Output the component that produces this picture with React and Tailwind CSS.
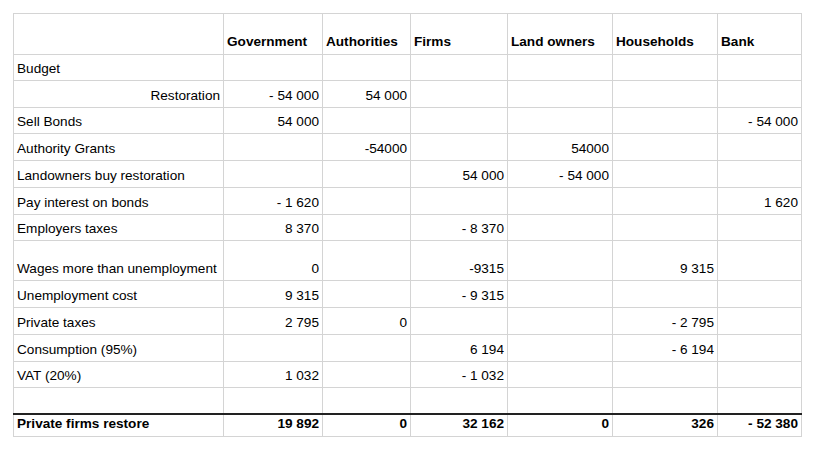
const columns = ["", "Government", "Authorities", "Firms", "Land owners", "Households", "Bank"];

const widths = ["w-[210px]", "w-[99px]", "w-[88px]", "w-[97px]", "w-[105px]", "w-[105px]", "w-[84px]"];

// [label, values..., row height]
const rows = [
  { label: "Budget", values: ["", "", "", "", "", ""], h: "h-[26px]" },
  { label: "Restoration", right: true, values: ["- 54 000", "54 000", "", "", "", ""], h: "h-[27px]" },
  { label: "Sell Bonds", values: ["54 000", "", "", "", "", "- 54 000"], h: "h-[26px]" },
  { label: "Authority Grants", values: ["", "-54000", "", "54000", "", ""], h: "h-[27px]" },
  { label: "Landowners buy restoration", values: ["", "", "54 000", "- 54 000", "", ""], h: "h-[27px]" },
  { label: "Pay interest on bonds", values: ["- 1 620", "", "", "", "", "1 620"], h: "h-[27px]" },
  { label: "Employers taxes", values: ["8 370", "", "- 8 370", "", "", ""], h: "h-[26px]" },
  { label: "Wages more than unemployment", values: ["0", "", "-9315", "", "9 315", ""], h: "h-[40px]" },
  { label: "Unemployment cost", values: ["9 315", "", "- 9 315", "", "", ""], h: "h-[27px]" },
  { label: "Private taxes", values: ["2 795", "0", "", "", "- 2 795", ""], h: "h-[27px]" },
  { label: "Consumption (95%)", values: ["", "", "6 194", "", "- 6 194", ""], h: "h-[27px]" },
  { label: "VAT (20%)", values: ["1 032", "", "- 1 032", "", "", ""], h: "h-[26px]" },
  { label: "", values: ["", "", "", "", "", ""], h: "h-[26px]" },
];

const total = ["19 892", "0", "32 162", "0", "326", "- 52 380"];

const cell = "border border-[#d4d4d4] px-[3px] align-bottom whitespace-nowrap overflow-hidden";

const App = () => {
  return (
    <div className="w-[820px] h-[461px] bg-white pt-[13px] pl-[13px] font-['Liberation_Sans',Arial,sans-serif] text-[13.6px] leading-[16px] text-black">
      <table className="table-fixed border-collapse w-[788px]">
        <colgroup>
          {widths.map((w, i) => (
            <col key={i} className={w} />
          ))}
        </colgroup>
        <thead>
          <tr className="h-[41px]">
            {columns.map((c, i) => (
              <th key={i} className={`${cell} pb-[4px] text-left font-bold`}>
                {c}
              </th>
            ))}
          </tr>
        </thead>
        <tbody>
          {rows.map((row, r) => (
            <tr key={r} className={row.h}>
              <td className={`${cell} pb-[3px] ${row.right ? "text-right" : "text-left"}`}>{row.label}</td>
              {row.values.map((v, i) => (
                <td key={i} className={`${cell} pb-[3px] text-right`}>
                  {v}
                </td>
              ))}
            </tr>
          ))}

          {/* totals */}
          <tr className="h-[23px] font-bold">
            <td className={`${cell} border-t-2 border-t-[#222] pb-[4px] text-left`}>Private firms restore</td>
            {total.map((v, i) => (
              <td key={i} className={`${cell} border-t-2 border-t-[#222] pb-[4px] text-right`}>
                {v}
              </td>
            ))}
          </tr>
        </tbody>
      </table>
    </div>
  );
};

export default App;
